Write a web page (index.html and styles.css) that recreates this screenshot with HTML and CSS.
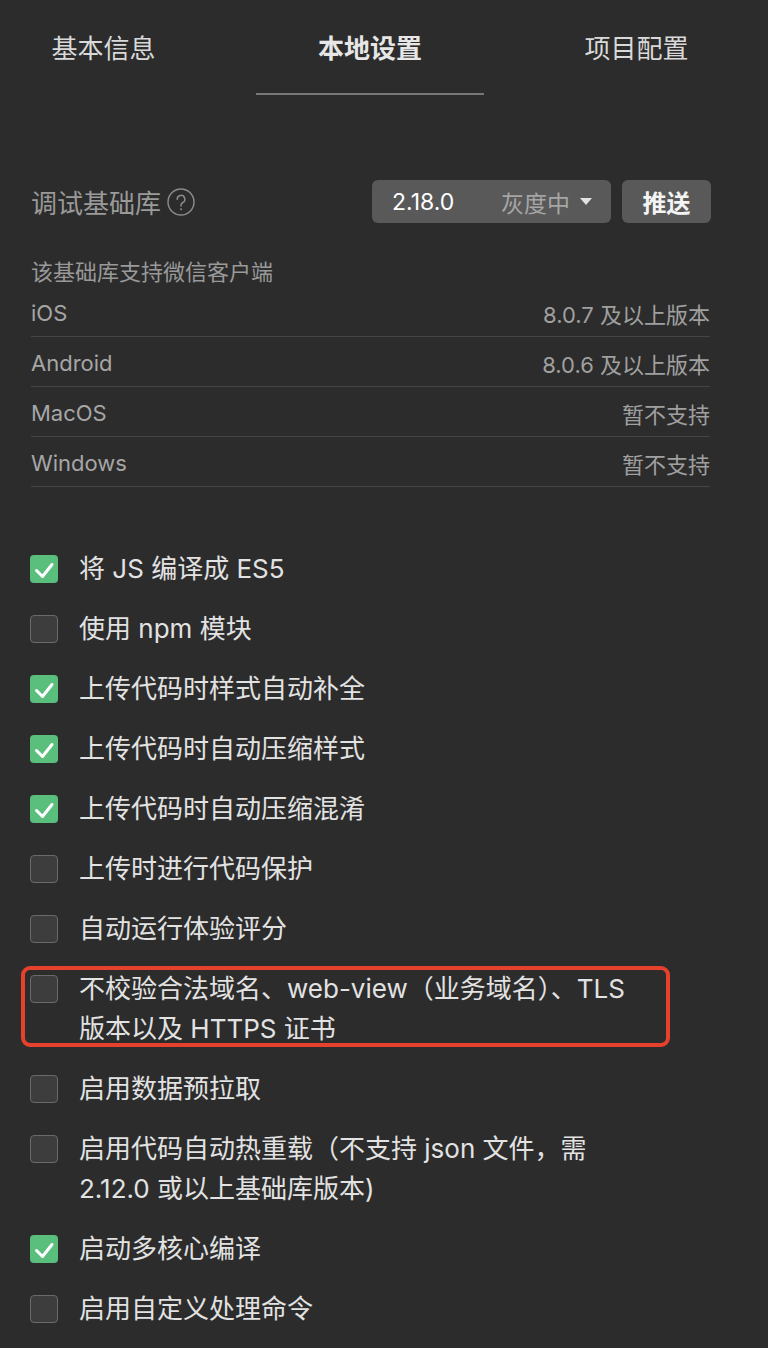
FILE: index.html
```html
<!DOCTYPE html>
<html lang="zh-CN">
<head>
<meta charset="utf-8">
<title>本地设置</title>
<link rel="stylesheet" href="styles.css">
</head>
<body>
<div class="page">
  <nav class="tabs">
    <div class="tab">基本信息</div>
    <div class="tab active">本地设置</div>
    <div class="tab">项目配置</div>
  </nav>

  <section class="lib">
    <div class="lib-label">
      <span>调试基础库</span>
      <svg class="help" width="28" height="28" viewBox="0 0 28 28">
        <circle cx="14" cy="14" r="13" fill="none" stroke="#8c8c8c" stroke-width="1.4"/>
        <path d="M10.2 11.2a3.8 3.8 0 1 1 5.6 3.3c-1.2.7-1.8 1.4-1.8 2.6v1" fill="none" stroke="#8c8c8c" stroke-width="1.5" stroke-linecap="round"/>
        <circle cx="14" cy="21.2" r="1" fill="#8c8c8c"/>
      </svg>
    </div>
    <div class="lib-actions">
      <div class="select">
        <span class="version">2.18.0</span>
        <span class="channel">灰度中
          <svg class="caret" width="12" height="7" viewBox="0 0 12 7"><path d="M0 0h12L6 7z" fill="#e2e2e2"/></svg>
        </span>
      </div>
      <div class="push">推送</div>
    </div>
  </section>

  <div class="subtitle">该基础库支持微信客户端</div>
  <ul class="clients">
    <li class="client"><span>iOS</span><span class="req">8.0.7 及以上版本</span></li>
    <li class="client"><span>Android</span><span class="req">8.0.6 及以上版本</span></li>
    <li class="client"><span>MacOS</span><span class="req">暂不支持</span></li>
    <li class="client"><span>Windows</span><span class="req">暂不支持</span></li>
  </ul>

  <ul class="options">
    <li class="option"><span class="box checked"></span><span class="text">将 JS 编译成 ES5</span></li>
    <li class="option"><span class="box"></span><span class="text">使用 npm 模块</span></li>
    <li class="option"><span class="box checked"></span><span class="text">上传代码时样式自动补全</span></li>
    <li class="option"><span class="box checked"></span><span class="text">上传代码时自动压缩样式</span></li>
    <li class="option"><span class="box checked"></span><span class="text">上传代码时自动压缩混淆</span></li>
    <li class="option"><span class="box"></span><span class="text">上传时进行代码保护</span></li>
    <li class="option"><span class="box"></span><span class="text">自动运行体验评分</span></li>
    <li class="option marked"><span class="box"></span><span class="text">不校验合法域名、web-view（业务域名）、TLS 版本以及 HTTPS 证书</span></li>
    <li class="option"><span class="box"></span><span class="text">启用数据预拉取</span></li>
    <li class="option"><span class="box"></span><span class="text">启用代码自动热重载（不支持 json 文件，需 2.12.0 或以上基础库版本)</span></li>
    <li class="option"><span class="box checked"></span><span class="text">启动多核心编译</span></li>
    <li class="option"><span class="box"></span><span class="text">启用自定义处理命令</span></li>
  </ul>
</div>
</body>
</html>
```
FILE: styles.css
```css
*, *::before, *::after { box-sizing: border-box; }
html, body {
  margin: 0;
  padding: 0;
  background: #2c2c2c;
}
body {
  font-family: "Inter", "Noto Sans CJK SC", sans-serif;
  width: 768px;
  height: 1348px;
  overflow: hidden;
}
.page {
  padding: 0 58px 0 31px;
}
.tabs {
  display: grid;
  grid-template-columns: repeat(3, 228px);
  column-gap: 38.5px;
  margin-left: -41.5px;
}
.tab {
  height: 95px;
  padding-top: 30px;
  line-height: 38px;
  font-size: 26px;
  color: #d9d9d9;
  text-align: center;
  border-bottom: 2px solid transparent;
}
.tab.active {
  font-weight: 700;
  color: #e6e6e6;
  border-bottom-color: #777777;
}
.lib {
  margin-top: 85px;
  height: 43px;
  display: flex;
  align-items: center;
  justify-content: space-between;
}
.lib-label {
  display: flex;
  align-items: center;
  gap: 6px;
  font-size: 26px;
  color: #9a9a9a;
}
.help { display: block; }
.lib-actions {
  display: flex;
  gap: 11px;
  margin-right: -1px;
}
.select {
  width: 239px;
  height: 43px;
  background: #595959;
  border-radius: 6px;
  display: flex;
  align-items: center;
  justify-content: space-between;
  padding: 0 19px 0 20px;
}
.version {
  font-size: 23px;
  color: #ffffff;
}
.channel {
  display: flex;
  align-items: center;
  gap: 10px;
  font-size: 23px;
  color: #a6a6a6;
}
.caret { display: block; }
.push {
  width: 89px;
  height: 43px;
  background: #595959;
  border-radius: 6px;
  display: flex;
  align-items: center;
  justify-content: center;
  font-size: 24px;
  font-weight: 700;
  color: #f4f4f4;
}
.subtitle {
  margin-top: 34px;
  line-height: 30px;
  font-size: 22px;
  color: #999999;
}
.clients {
  list-style: none;
  margin: 0;
  padding: 0;
}
.client {
  height: 50px;
  padding-top: 3px;
  display: flex;
  align-items: center;
  justify-content: space-between;
  border-bottom: 1px solid #454545;
  font-size: 22px;
  color: #a6a6a6;
}
.req { color: #a0a0a0; }
.options {
  list-style: none;
  margin: 62px 0 0 -1px;
  padding: 0;
}
.option {
  position: relative;
  display: flex;
  align-items: flex-start;
  gap: 21px;
  margin-bottom: 20px;
  font-size: 26px;
  line-height: 40px;
  color: #e2e2e2;
}
.box {
  flex: none;
  width: 28px;
  height: 28px;
  margin-top: 6px;
  border-radius: 4px;
  background: #3d3d3d;
  border: 1px solid #6a6a6a;
}
.box.checked {
  border: none;
  background-color: #5abf7c;
  background-image: url("data:image/svg+xml,%3Csvg xmlns='http://www.w3.org/2000/svg' width='28' height='28' viewBox='0 0 28 28'%3E%3Cpath d='M6.5 15.5l6 6L22 9.5' fill='none' stroke='%23ffffff' stroke-width='3' stroke-linecap='round' stroke-linejoin='round'/%3E%3C/svg%3E");
}
.text {
  width: 572px;
}
.marked::after {
  content: "";
  position: absolute;
  left: -9px;
  top: -3px;
  width: 649px;
  height: 81px;
  border: 4px solid #e5412d;
  border-radius: 9px;
  pointer-events: none;
}
```
